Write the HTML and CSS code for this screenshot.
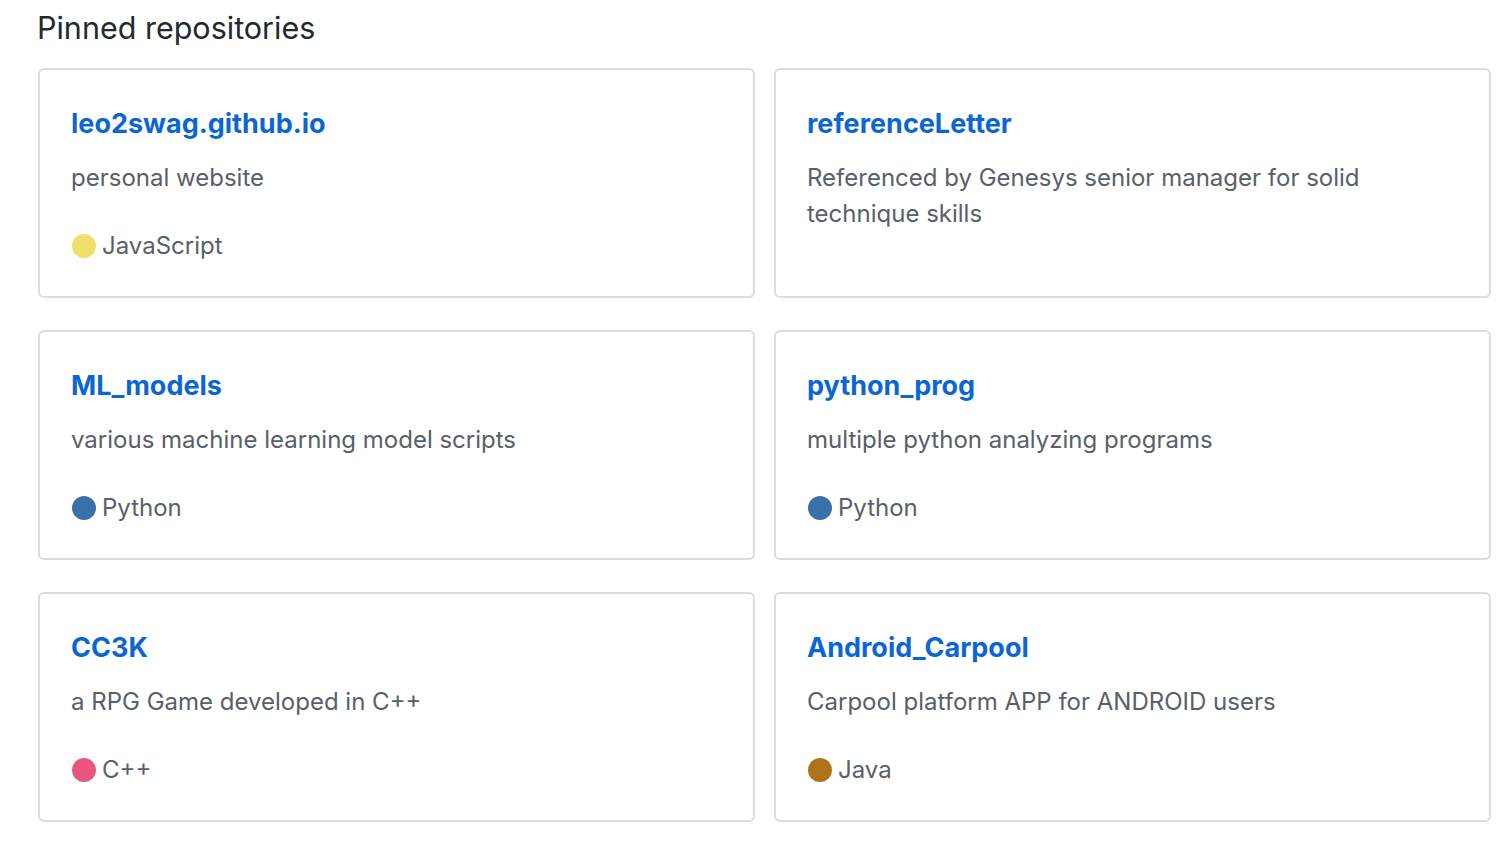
FILE: index.html
```html
<!DOCTYPE html>
<html lang="en">
<head>
<meta charset="utf-8">
<title>Pinned repositories</title>
<link rel="stylesheet" href="styles.css">
</head>
<body>
<div class="pinned">
  <h2 class="pinned-title">Pinned repositories</h2>
  <ol class="pinned-list">
    <li class="card">
      <a class="repo" href="#">leo2swag.github.io</a>
      <p class="desc">personal website</p>
      <p class="lang"><span class="dot js"></span><span>JavaScript</span></p>
    </li>
    <li class="card">
      <a class="repo" href="#">referenceLetter</a>
      <p class="desc">Referenced by Genesys senior manager for solid technique skills</p>
    </li>
    <li class="card">
      <a class="repo" href="#">ML_models</a>
      <p class="desc">various machine learning model scripts</p>
      <p class="lang"><span class="dot py"></span><span>Python</span></p>
    </li>
    <li class="card">
      <a class="repo" href="#">python_prog</a>
      <p class="desc">multiple python analyzing programs</p>
      <p class="lang"><span class="dot py"></span><span>Python</span></p>
    </li>
    <li class="card">
      <a class="repo" href="#">CC3K</a>
      <p class="desc">a RPG Game developed in C++</p>
      <p class="lang"><span class="dot cpp"></span><span>C++</span></p>
    </li>
    <li class="card">
      <a class="repo" href="#">Android_Carpool</a>
      <p class="desc">Carpool platform APP for ANDROID users</p>
      <p class="lang"><span class="dot java"></span><span>Java</span></p>
    </li>
  </ol>
</div>
</body>
</html>
```
FILE: styles.css
```css
* { box-sizing: border-box; }
html, body {
  margin: 0;
  padding: 0;
  background: #ffffff;
}
body {
  font-family: Inter, "Noto Sans", "Liberation Sans", sans-serif;
  color: #24292e;
}
.pinned {
  padding: 4px 21px 0 38px;
}
.pinned-title {
  margin: 0 0 16px -1px;
  font-size: 30.5px;
  line-height: 48px;
  font-weight: 400;
  color: #24292e;
}
.pinned-list {
  list-style: none;
  margin: 0;
  padding: 0;
  display: grid;
  grid-template-columns: 1fr 1fr;
  column-gap: 19px;
  row-gap: 32px;
}
.card {
  border: 2px solid #dadde1;
  border-radius: 6px;
  padding: 33px 31px 32px;
  display: flex;
  flex-direction: column;
  align-items: flex-start;
}
.repo {
  font-size: 27px;
  line-height: 42px;
  font-weight: 700;
  color: #0b66d4;
  text-decoration: none;
}
.desc {
  margin: 15px 0 0;
  font-size: 24px;
  line-height: 36px;
  color: #586069;
}
.lang {
  margin: 32px 0 0;
  font-size: 24px;
  line-height: 36px;
  color: #586069;
  display: flex;
  align-items: center;
  gap: 6px;
}
.dot {
  width: 24px;
  height: 24px;
  border-radius: 50%;
  display: inline-block;
  margin-left: 1px;
}
.js { background: #f0df6a; }
.py { background: #3a72a8; }
.cpp { background: #e8557f; }
.java { background: #b07219; }
```
